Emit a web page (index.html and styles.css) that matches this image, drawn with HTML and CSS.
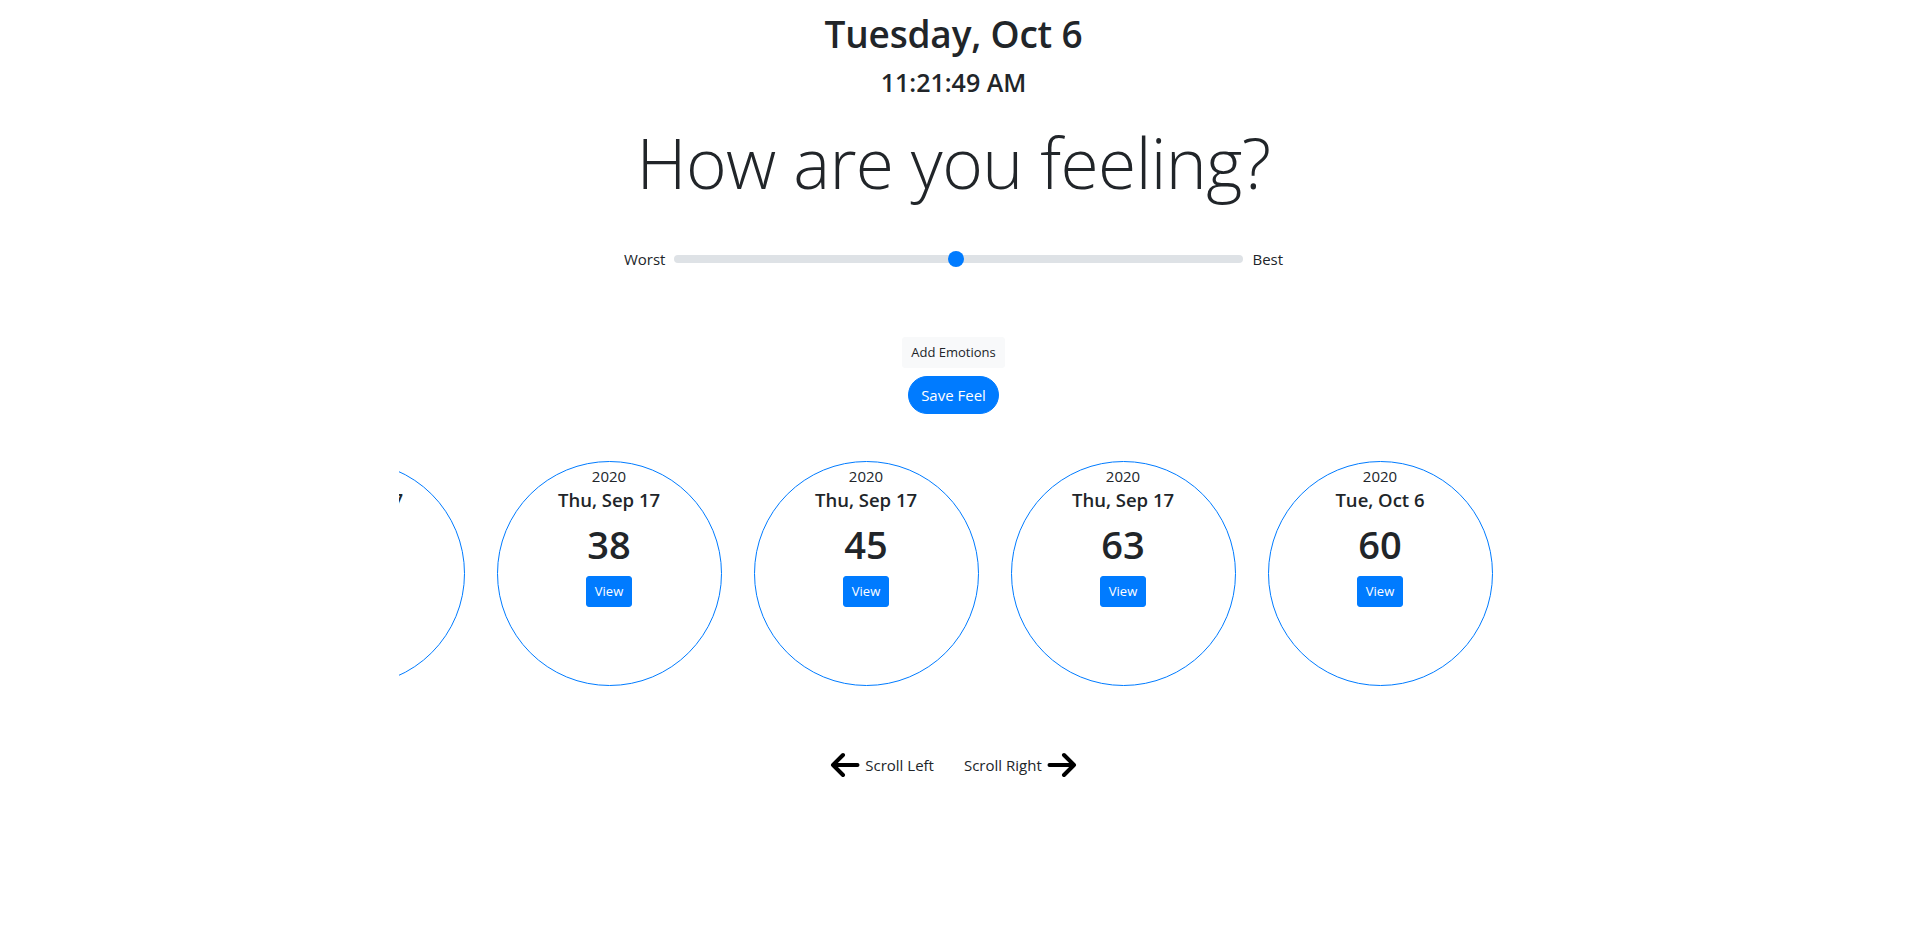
FILE: index.html
```html
<!DOCTYPE html>
<html lang="en">
<head>
<meta charset="utf-8">
<title>Feel</title>
<link rel="stylesheet" href="styles.css">
</head>
<body>
<main class="page">
  <header class="clock">
    <h1 class="clock-date">Tuesday, Oct 6</h1>
    <h3 class="clock-time">11:21:49 AM</h3>
  </header>

  <h1 class="question">How are you feeling?</h1>

  <div class="rating">
    <span class="rating-label">Worst</span>
    <input class="rating-range" type="range" min="0" max="100" step="0.5" value="49.5">
    <span class="rating-label">Best</span>
  </div>

  <div class="actions">
    <button class="btn btn-light" type="button">Add Emotions</button>
    <button class="btn btn-pill" type="button">Save Feel</button>
  </div>

  <section class="history">
    <div class="feel"><div class="feel-year">2020</div><h5 class="feel-date">Thu, Sep 17</h5><h1 class="feel-score">52</h1><button class="btn btn-view" type="button">View</button></div>
    <div class="feel"><div class="feel-year">2020</div><h5 class="feel-date">Thu, Sep 17</h5><h1 class="feel-score">38</h1><button class="btn btn-view" type="button">View</button></div>
    <div class="feel"><div class="feel-year">2020</div><h5 class="feel-date">Thu, Sep 17</h5><h1 class="feel-score">45</h1><button class="btn btn-view" type="button">View</button></div>
    <div class="feel"><div class="feel-year">2020</div><h5 class="feel-date">Thu, Sep 17</h5><h1 class="feel-score">63</h1><button class="btn btn-view" type="button">View</button></div>
    <div class="feel"><div class="feel-year">2020</div><h5 class="feel-date">Tue, Oct 6</h5><h1 class="feel-score">60</h1><button class="btn btn-view" type="button">View</button></div>
  </section>

  <nav class="scroller">
    <span class="scroll-link">
      <svg class="arrow" width="30" height="26" viewBox="0 0 30 26" aria-hidden="true"><path d="M27.5 13H3M13 3L3 13L13 23" fill="none" stroke="#000" stroke-width="4" stroke-linecap="round" stroke-linejoin="round"/></svg>
      <span>Scroll Left</span>
    </span>
    <span class="scroll-link">
      <span>Scroll Right</span>
      <svg class="arrow" width="30" height="26" viewBox="0 0 30 26" aria-hidden="true"><path d="M2.5 13H27M17 3L27 13L17 23" fill="none" stroke="#000" stroke-width="4" stroke-linecap="round" stroke-linejoin="round"/></svg>
    </span>
  </nav>
</main>
</body>
</html>
```

FILE: styles.css
```css
* { box-sizing: border-box; }

html, body {
  margin: 0;
  padding: 0;
  background: #fff;
}

body {
  font-family: "Open Sans", "Noto Sans", sans-serif;
  font-size: 16px;
  line-height: 1.5;
  color: #212529;
}

.page {
  display: flex;
  flex-direction: column;
  align-items: center;
  padding-top: 10px;
}

.clock {
  display: flex;
  flex-direction: column;
  align-items: center;
}

.clock-date {
  margin: 0;
  font-size: 37px;
  font-weight: 600;
  line-height: 48px;
  letter-spacing: -0.2px;
}

.clock-time {
  margin: 9px 0 0;
  font-size: 25px;
  font-weight: 600;
  line-height: 31px;
}

.question {
  margin: 21px 0 0;
  font-size: 69.5px;
  font-weight: 300;
  line-height: 86px;
  letter-spacing: -0.6px;
}

.rating {
  display: flex;
  align-items: center;
  gap: 9px;
  margin-top: 42px;
  height: 24px;
}

.rating-label {
  font-size: 15px;
  line-height: 24px;
}

.rating-range {
  -webkit-appearance: none;
  appearance: none;
  width: 569px;
  height: 22px;
  margin: 0;
  padding: 0;
  background: transparent;
}

.rating-range::-webkit-slider-runnable-track {
  height: 8px;
  background: #dee2e6;
  border-radius: 16px;
}

.rating-range::-webkit-slider-thumb {
  -webkit-appearance: none;
  appearance: none;
  width: 16px;
  height: 16px;
  margin-top: -4px;
  border: 0;
  border-radius: 50%;
  background: #007bff;
}

.actions {
  display: flex;
  flex-direction: column;
  align-items: center;
  gap: 8px;
  margin-top: 66px;
}

.btn {
  font-family: inherit;
  border: 1px solid transparent;
  cursor: pointer;
}

.btn-light {
  background: #f8f9fa;
  border-color: #f8f9fa;
  color: #212529;
  font-size: 13px;
  line-height: 21px;
  padding: 4px 8px;
  border-radius: 3px;
}

.btn-pill {
  background: #007bff;
  border-color: #007bff;
  color: #fff;
  font-size: 15px;
  line-height: 24px;
  padding: 6px 12px;
  border-radius: 50rem;
}

.history {
  width: 1110px;
  margin-top: 47px;
  display: flex;
  justify-content: flex-end;
  overflow: hidden;
}

.feel {
  flex: 0 0 225px;
  width: 225px;
  height: 225px;
  margin: 0 16px;
  border: 1px solid #007bff;
  border-radius: 50%;
  padding-top: 2px;
  display: flex;
  flex-direction: column;
  align-items: center;
}

.feel-year {
  font-size: 15px;
  line-height: 24px;
}

.feel-date {
  margin: 0 0 8px;
  font-size: 18.5px;
  font-weight: 600;
  line-height: 24px;
  white-space: nowrap;
}

.feel-score {
  margin: 0 0 8px;
  font-size: 38px;
  font-weight: 600;
  line-height: 48px;
}

.btn-view {
  background: #007bff;
  border-color: #007bff;
  color: #fff;
  font-size: 13px;
  line-height: 21px;
  padding: 4px 8px;
  border-radius: 3px;
}

.scroller {
  display: flex;
  align-items: center;
  gap: 30px;
  margin-top: 66px;
}

.scroll-link {
  display: flex;
  align-items: center;
  gap: 5px;
  font-size: 15px;
  line-height: 24px;
}

.arrow {
  display: block;
}
```
